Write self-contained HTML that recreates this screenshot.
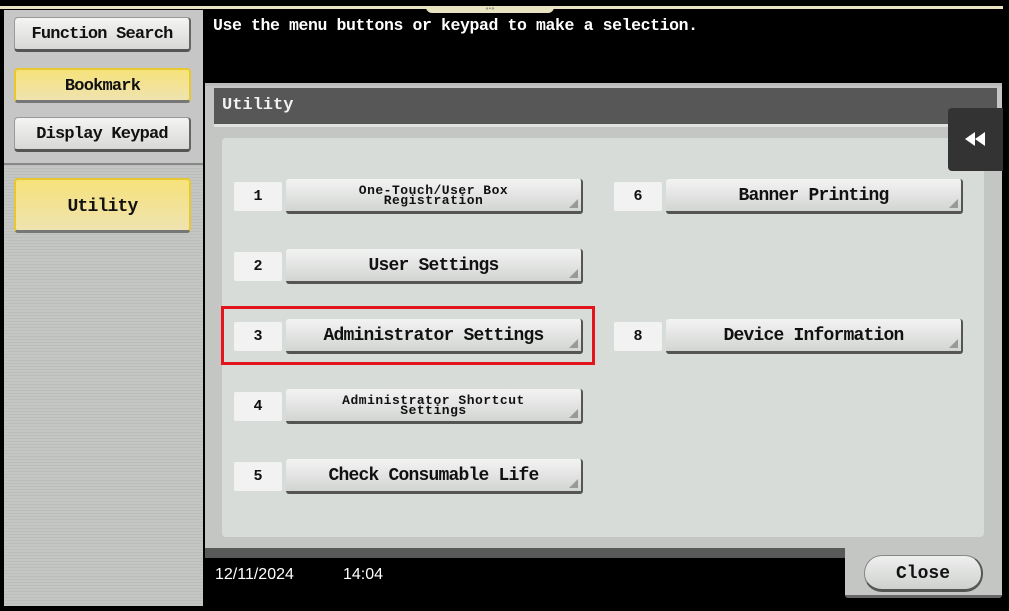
<!DOCTYPE html>
<html><head><style>
body{margin:0;width:1009px;height:611px;background:#000;position:relative;overflow:hidden;font-family:"Liberation Mono",monospace;}
div{position:absolute;box-sizing:border-box;}
.lbtn{left:14px;width:177px;height:35px;border-radius:4px;background:linear-gradient(#f4f4f2,#d8d8d6);border:1px solid #999;border-bottom:3px solid #555;border-right:2px solid #666;font-size:17px;font-weight:bold;text-align:center;line-height:34px;color:#111;letter-spacing:-0.8px;}
.yel{background:linear-gradient(#f6e27a,#efe3b0);border:2px solid #e8c830;border-bottom:3px solid #777;}
.num{width:48px;height:29px;background:#f1f2f1;border-radius:2px;font-size:15px;font-weight:bold;text-align:center;line-height:30px;color:#111;}
.btn{width:297px;height:35px;border-radius:3px;background:linear-gradient(#f2f3f2,#d3d5d3);border-bottom:3px solid #555;border-right:2px solid #555;font-size:18px;font-weight:bold;text-align:center;line-height:34px;color:#111;letter-spacing:-0.8px;}
.btn.sm{font-size:13px;line-height:10px;padding-top:7px;letter-spacing:0.5px;}
.btn::after{content:"";position:absolute;right:3px;bottom:3px;border-left:9px solid transparent;border-bottom:9px solid #999;}
</style></head><body>
<div style="left:0;top:6px;width:1003px;height:3px;background:#e8e3c0"></div>
<div style="left:426px;top:6px;width:128px;height:7px;background:#e8e3c0;border-radius:0 0 6px 6px;font-size:5px;text-align:center;line-height:7px;color:#555">«•»</div>
<div style="left:4px;top:10px;width:199px;height:596px;background:repeating-linear-gradient(#c4c6c4 0 2px,#bcbebc 2px 3px)"></div>
<div style="left:4px;top:10px;width:199px;height:155px;background:#c5c6c5;border-bottom:2px solid #888"></div>
<div class="lbtn" style="top:17px">Function Search</div>
<div class="lbtn yel" style="top:68px">Bookmark</div>
<div class="lbtn" style="top:117px">Display Keypad</div>
<div class="lbtn yel" style="top:178px;height:55px;line-height:54px;font-size:18px">Utility</div>
<div style="left:213px;top:16px;color:#fff;font-size:16.5px;font-weight:bold;letter-spacing:-0.4px">Use the menu buttons or keypad to make a selection.</div>
<div style="left:205px;top:83px;width:797px;height:475px;background:#c3c6c3;border-top:3px solid #bbb"></div>
<div style="left:205px;top:548px;width:640px;height:10px;background:#595959"></div>
<div style="left:845px;top:548px;width:157px;height:50px;background:#c3c6c3;border-bottom:3px solid #666;border-radius:0 0 3px 3px"></div>
<div style="left:214px;top:88px;width:783px;height:39px;background:#575757;border-bottom:3px solid #dfe2df;color:#f0f0f0;font-size:17px;font-weight:bold;line-height:36px;padding-left:8px">Utility</div>
<div style="left:222px;top:138px;width:762px;height:399px;background:#d8dcd8;border-radius:4px"></div>
<div style="left:948px;top:108px;width:55px;height:63px;background:#333;border-radius:4px 0 0 4px"></div>
<svg style="position:absolute;left:964px;top:131px" width="24" height="16" viewBox="0 0 24 16"><path d="M1 8L11 1V15Z M11 8L21 1V15Z" fill="#fff"/></svg>

<div class="num" style="left:234px;top:182px">1</div>
<div class="btn sm" style="left:286px;top:179px">One-Touch/User Box<br>Registration</div>
<div class="num" style="left:234px;top:252px">2</div>
<div class="btn" style="left:286px;top:249px">User Settings</div>
<div class="num" style="left:234px;top:322px">3</div>
<div class="btn" style="left:286px;top:319px">Administrator Settings</div>
<div class="num" style="left:234px;top:392px">4</div>
<div class="btn sm" style="left:286px;top:389px">Administrator Shortcut<br>Settings</div>
<div class="num" style="left:234px;top:462px">5</div>
<div class="btn" style="left:286px;top:459px">Check Consumable Life</div>
<div class="num" style="left:614px;top:182px">6</div>
<div class="btn" style="left:666px;top:179px">Banner Printing</div>
<div class="num" style="left:614px;top:322px">8</div>
<div class="btn" style="left:666px;top:319px">Device Information</div>
<div style="left:221px;top:306px;width:374px;height:59px;border:3px solid #e3141c"></div>

<div style="left:215px;top:566px;color:#fff;font-family:'Liberation Sans',sans-serif;font-size:16px">12/11/2024</div>
<div style="left:343px;top:566px;color:#fff;font-family:'Liberation Sans',sans-serif;font-size:16px">14:04</div>
<div style="left:864px;top:555px;width:119px;height:37px;border-radius:18px;background:linear-gradient(#eeefee,#cfd1cf);border:1px solid #888;border-bottom:3px solid #555;border-right:2px solid #555;text-align:center;font-size:18px;font-weight:bold;line-height:36px;color:#111">Close</div>
</body></html>
